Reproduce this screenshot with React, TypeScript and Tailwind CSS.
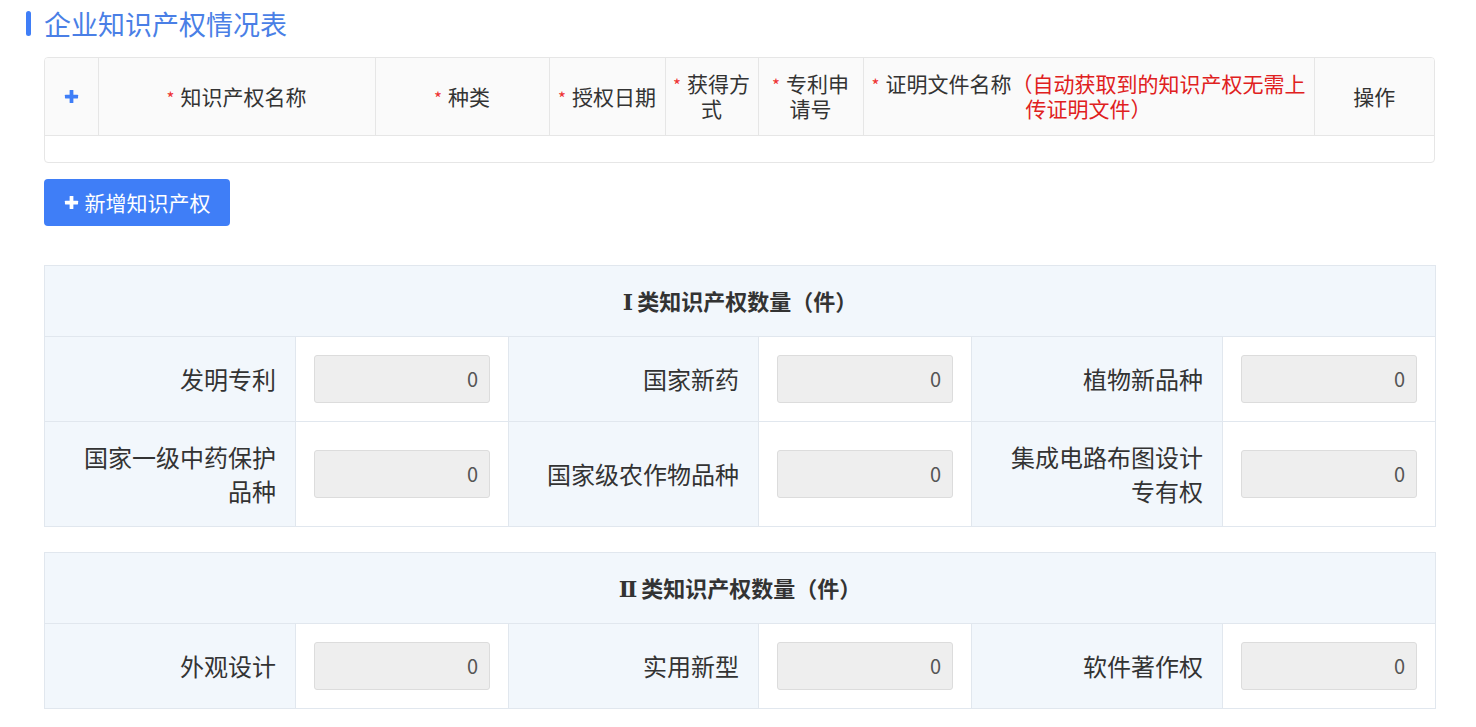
import React from "react";

const FONT = '"Microsoft YaHei", "Noto Sans CJK SC", "Noto Sans", sans-serif';

function PlusIcon({ className }: { className?: string }) {
  return (
    <svg viewBox="0 0 16 16" className={className} fill="currentColor">
      <rect x="6" y="1" width="4" height="14" rx="0.6" />
      <rect x="1" y="6" width="14" height="4" rx="0.6" />
    </svg>
  );
}

const headCols = [
  { label: "知识产权名称", w: "w-[277px]" },
  { label: "种类", w: "w-[174px]" },
  { label: "授权日期", w: "w-[116px]" },
  { label: "获得方式", w: "w-[93px]" },
  { label: "专利申请号", w: "w-[105px]" },
];

function Star() {
  return <span className="mr-[6px] text-[17px] leading-none text-[#e33]">*</span>;
}

function IpTable() {
  return (
    <div className="overflow-hidden rounded-[4px] border border-[#e6e6e6]">
      <table className="w-full table-fixed border-collapse text-[21px] leading-[25px] text-[#333]">
        <thead>
          <tr className="bg-[#fafafa]">
            <th className="h-[77px] w-[53px] border-r border-b border-[#e6e6e6] font-normal">
              <PlusIcon className="mx-auto h-[15px] w-[15px] text-[#3f7ef7]" />
            </th>
            {headCols.map((c) => (
              <th
                key={c.label}
                className={`${c.w} border-r border-b border-[#e6e6e6] px-1 py-[12px] text-center align-middle font-normal`}
              >
                <Star />
                {c.label}
              </th>
            ))}
            <th className="w-[451px] border-r border-b border-[#e6e6e6] px-2 py-[12px] text-center align-middle font-normal">
              <Star />
              证明文件名称
              <span className="text-[#e02020]">（自动获取到的知识产权无需上传证明文件）</span>
            </th>
            <th className="border-b border-[#e6e6e6] px-2 text-center font-normal">操作</th>
          </tr>
        </thead>
        <tbody>
          <tr>
            <td colSpan={8} className="h-[27px]" />
          </tr>
        </tbody>
      </table>
    </div>
  );
}

type Item = { label: string };

function CountSection({ numeral, rows }: { numeral: string; rows: Item[][] }) {
  return (
    <table className="w-full table-fixed border-collapse text-[#333]">
      <colgroup>
        <col className="w-[251px]" />
        <col className="w-[213px]" />
        <col className="w-[250px]" />
        <col className="w-[213px]" />
        <col className="w-[251px]" />
        <col className="w-[213px]" />
      </colgroup>
      <tbody>
        <tr>
          <td
            colSpan={6}
            className="h-[71px] border border-[#e1e7ee] bg-[#f2f7fc] text-center text-[22px] font-bold"
          >
            <span className="mr-[4px] font-['DejaVu_Serif',serif]">{numeral}</span>
            类知识产权数量（件）
          </td>
        </tr>
        {rows.map((row, i) => (
          <tr key={i}>
            {row.map((item) => (
              <React.Fragment key={item.label}>
                <td className="border border-[#e1e7ee] bg-[#f2f7fc] px-[19px] py-[18px] text-right align-middle text-[24px] leading-[34px]">
                  {item.label}
                </td>
                <td className="border border-[#e1e7ee] bg-white px-[18px] py-[18px] align-middle">
                  <div className="flex h-[48px] items-center justify-end rounded-[3px] border border-[#dcdcdc] bg-[#eeeeee] pr-[11px] text-[20px] text-[#555]">
                    0
                  </div>
                </td>
              </React.Fragment>
            ))}
          </tr>
        ))}
      </tbody>
    </table>
  );
}

export default function App() {
  return (
    <div className="min-h-screen bg-white pl-[26px] pr-[41px]" style={{ fontFamily: FONT }}>
      <div className="flex h-[46px] items-center gap-[13px]">
        <span className="h-[25px] w-[5px] rounded-full bg-[#3f7ef7]" />
        <h1 className="text-[27px] leading-none text-[#4a7fe6]">企业知识产权情况表</h1>
      </div>

      <div className="ml-[18px]">
        <div className="mt-[11px]">
          <IpTable />
        </div>

        <button className="mt-[16px] flex h-[47px] w-[186px] items-center justify-center gap-[6px] rounded-[4px] bg-[#3f7ef7] text-[21px] text-white">
          <PlusIcon className="h-[15px] w-[15px]" />
          新增知识产权
        </button>

        <div className="mt-[39px]">
          <CountSection
            numeral="Ⅰ"
            rows={[
              [{ label: "发明专利" }, { label: "国家新药" }, { label: "植物新品种" }],
              [
                { label: "国家一级中药保护品种" },
                { label: "国家级农作物品种" },
                { label: "集成电路布图设计专有权" },
              ],
            ]}
          />
        </div>

        <div className="mt-[25px]">
          <CountSection
            numeral="Ⅱ"
            rows={[[{ label: "外观设计" }, { label: "实用新型" }, { label: "软件著作权" }]]}
          />
        </div>
      </div>
    </div>
  );
}
